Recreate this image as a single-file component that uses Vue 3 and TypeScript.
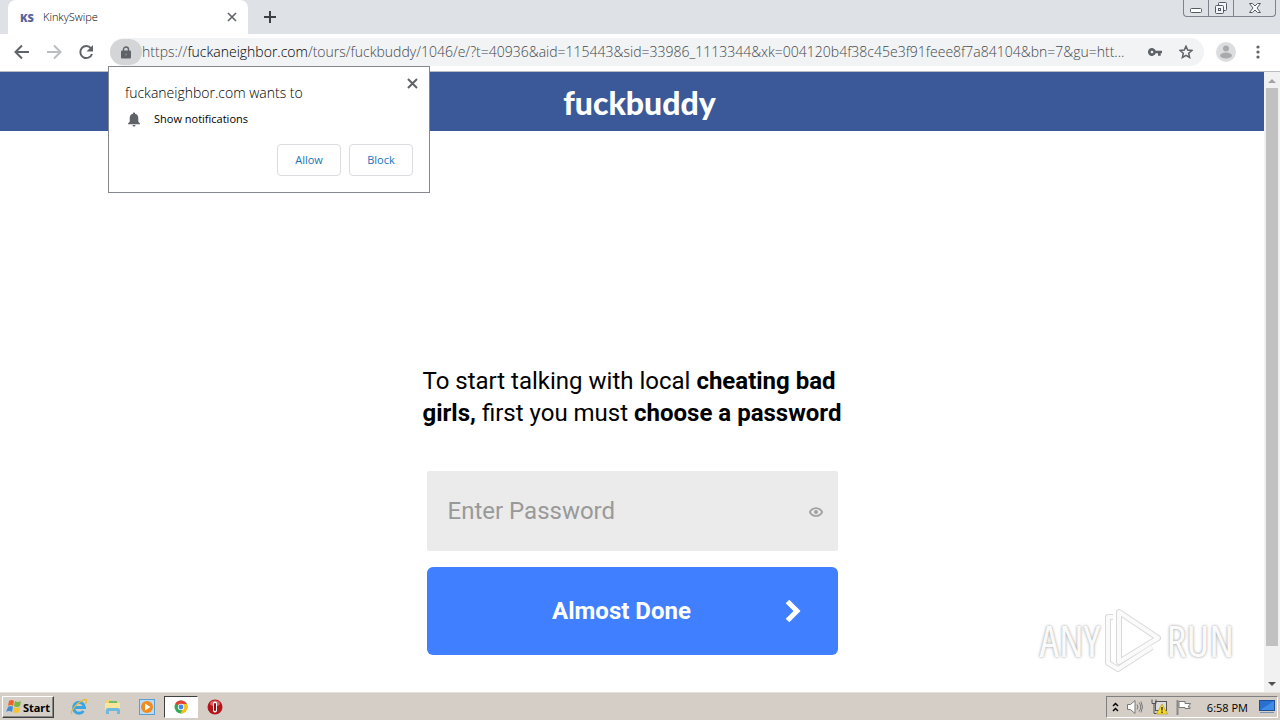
<script setup lang="ts">
import { ref } from 'vue'

const password = ref('')
const address = {
  scheme: 'https://',
  host: 'fuckaneighbor.com',
  path: '/tours/fuckbuddy/1046/e/?t=40936&aid=115443&sid=33986_1113344&xk=004120b4f38c45e3f91feee8f7a84104&bn=7&gu=htt...',
}
</script>

<template>
  <div class="screen">
    <header class="tabstrip">
      <div class="tab">
        <span class="favicon">KS</span>
        <span class="tab-title">KinkySwipe</span>
        <button class="plain" aria-label="Close tab">
          <svg width="10" height="10" viewBox="0 0 10 10"><path d="M1 1l8 8M9 1l-8 8" stroke="#5f6368" stroke-width="1.6" /></svg>
        </button>
      </div>
      <button class="plain new-tab" aria-label="New tab">
        <svg width="12" height="12" viewBox="0 0 12 12"><path d="M6 0v12M0 6h12" stroke="#3c4043" stroke-width="2" /></svg>
      </button>
      <div class="window-buttons">
        <button aria-label="Minimize">
          <svg width="14" height="14" viewBox="0 0 14 14"><rect x="1.5" y="7.5" width="11" height="4" rx="1" fill="#fff" stroke="#555b66" /></svg>
        </button>
        <button aria-label="Restore">
          <svg width="14" height="14" viewBox="0 0 14 14" fill="#f4f5f8" stroke="#555b66"><rect x="4.500" y="1.500" width="8" height="8" rx="1" /><rect x="1.500" y="4.500" width="8" height="8" rx="1" /><rect x="4.500" y="7.500" width="2" height="2" /></svg>
        </button>
        <button class="wide" aria-label="Close">
          <svg width="14" height="14" viewBox="0 0 14 14"><path d="M1.500 2.500h3L7 5l2.500-2.500h3L9 7l3.500 4.500h-3L7 9l-2.500 2.500h-3L5 7z" fill="#fff" stroke="#555b66" /></svg>
        </button>
      </div>
    </header>

    <nav class="toolbar">
      <button class="plain" aria-label="Back">
        <svg width="16" height="16" viewBox="0 0 16 16" fill="none" stroke="#5f6368" stroke-width="2"><path d="M15 8H2M8 1.500L1.500 8L8 14.500" /></svg>
      </button>
      <button class="plain" aria-label="Forward">
        <svg width="16" height="16" viewBox="0 0 16 16" fill="none" stroke="#bbbdbf" stroke-width="2"><path d="M1 8h13M8 1.500L14.500 8L8 14.500" /></svg>
      </button>
      <button class="plain" aria-label="Reload">
        <svg width="16" height="16" viewBox="0 0 16 16"><path d="M13 4.300A6 6 0 1 0 14 10" fill="none" stroke="#5f6368" stroke-width="2" /><path d="M15 1v6.500H8.500z" fill="#5f6368" /></svg>
      </button>
      <div class="omnibox">
        <button class="lock" aria-label="Site information">
          <svg width="10" height="13" viewBox="0 0 10 13"><rect y="4.500" width="10" height="8" rx="1" fill="#5f6368" /><path d="M2.500 5V3.500a2.500 2.500 0 0 1 5 0V5" fill="none" stroke="#5f6368" stroke-width="1.400" /><circle cx="5" cy="8.500" r="1" fill="#85888c" /></svg>
        </button>
        <span class="url">{{ address.scheme }}<b>{{ address.host }}</b>{{ address.path }}</span>
        <button class="plain" aria-label="Saved passwords">
          <svg width="14" height="8" viewBox="0 0 14 8"><path fill="#5f6368" fill-rule="evenodd" d="M7.700 2.700A4 4 0 1 0 7.700 5.300H10v2.500h2.700V5.300H14V2.700zM4 2.700a1.300 1.300 0 1 1 0 2.600a1.300 1.300 0 0 1 0-2.600z" /></svg>
        </button>
        <button class="plain" aria-label="Bookmark this page">
          <svg width="14" height="14" viewBox="0 0 14 14"><path d="M7 1.200l1.700 3.900 4.200.4-3.200 2.800.9 4.200L7 10.300l-3.600 2.200.9-4.200-3.200-2.800 4.200-.4z" fill="none" stroke="#5f6368" stroke-width="1.500" /></svg>
        </button>
      </div>
      <button class="plain profile" aria-label="Profile">
        <svg width="20" height="20" viewBox="0 0 20 20"><circle cx="10" cy="10" r="10" fill="#dcddde" /><circle cx="10" cy="6.500" r="3" fill="#a8aaab" /><ellipse cx="10" cy="13.500" rx="6" ry="3" fill="#a8aaab" /></svg>
      </button>
      <button class="plain" aria-label="Menu">
        <svg width="4" height="14" viewBox="0 0 4 14" fill="#5f6368"><circle cx="2" cy="2" r="1.600" /><circle cx="2" cy="7" r="1.600" /><circle cx="2" cy="12" r="1.600" /></svg>
      </button>
    </nav>

    <section class="permission" role="dialog" aria-label="Notification permission">
      <button class="plain dismiss" aria-label="Dismiss">
        <svg width="11" height="11" viewBox="0 0 11 11"><path d="M1 1l9 9M10 1l-9 9" stroke="#5f6368" stroke-width="2" /></svg>
      </button>
      <p class="asker">fuckaneighbor.com wants to</p>
      <p class="request">
        <svg width="12" height="15" viewBox="0 0 12 15" fill="#5f6368"><path d="M6 .5c.7 0 1.100.5 1.100 1.200C9.200 2.200 10.300 4 10.300 6v3.800L12 11.500v.8H0v-.8l1.700-1.700V6c0-2 1.100-3.800 3.200-4.300C4.900 1 5.300.5 6 .5zM4.500 13h3a1.500 1.500 0 0 1-3 0z" /></svg>
        <span>Show notifications</span>
      </p>
      <div class="choices">
        <button>Allow</button>
        <button>Block</button>
      </div>
    </section>

    <div class="viewport">
      <main class="page">
        <div class="banner"><span class="logo">fuckbuddy</span></div>
        <form class="signup" @submit.prevent>
          <h1>To start talking with local <b>cheating bad<br />girls,</b> first you must <b>choose a password</b></h1>
          <div class="field">
            <input v-model="password" type="password" placeholder="Enter Password" aria-label="Enter Password" />
            <button class="plain" type="button" aria-label="Show password">
              <svg width="14" height="12" viewBox="0 0 14 12" fill="none" stroke="#a0a0a0"><path d="M.8 7C3.500 1.700 10.500 1.700 13.200 7C10.500 12.300 3.500 12.300.8 7z" stroke-width="1.700" /><circle cx="7" cy="7" r="2" fill="#a0a0a0" stroke="none" /></svg>
            </button>
          </div>
          <button class="submit" type="submit">
            <span>Almost Done</span>
            <svg width="16" height="24" viewBox="0 0 16 24"><path d="M2.500 2.500L12 12L2.500 21.500" fill="none" stroke="#fff" stroke-width="5" /></svg>
          </button>
        </form>
      </main>
      <div class="scrollbar">
        <svg width="8" height="4" viewBox="0 0 8 4"><path d="M0 4l4-4 4 4z" fill="#a3a3a3" /></svg>
        <div class="thumb"></div>
        <svg width="8" height="4" viewBox="0 0 8 4"><path d="M0 0l4 4 4-4z" fill="#505050" /></svg>
      </div>
      <div class="watermark">
        <span>ANY</span>
        <svg width="58" height="64" viewBox="0 0 58 64" fill="none" stroke-linejoin="round"><g stroke="#d9d9d9" stroke-width="6"><path d="M15 4l39 26L15 54z" /><path d="M9 9H4v46l10 6 34-22" /></g><g stroke="#fafafa" stroke-width="4"><path d="M15 4l39 26L15 54z" /><path d="M9 9H4v46l10 6 34-22" /></g></svg>
        <span>RUN</span>
      </div>
    </div>

    <footer class="taskbar">
      <button class="start">
        <svg width="16" height="16" viewBox="0 0 16 16"><path d="M3 2q3-2 5 0L7 7Q5 5 2 7z" fill="#e8642b" /><path d="M9 2q3 2 6 0l-1 5q-3 2-6 0z" fill="#79b541" /><path d="M2 8q3-2 5 0l-1 5q-3-2-6 0z" fill="#3e8ddd" /><path d="M8 8q3 2 6 0l-1 5q-3 2-6 0z" fill="#f7c331" /></svg>
        Start
      </button>
      <div class="launchers">
        <button aria-label="Internet Explorer">
          <svg width="18" height="18" viewBox="0 0 18 18" fill="none"><path d="M4 9.500h10.500A5.500 5.500 0 1 0 13.500 13" stroke="#3aa5e5" stroke-width="3" /><path d="M2 16C-1 14 8 3 15 1.500c3-.3 1 3.500.5 4.500" stroke="#e6b93c" stroke-width="1.300" /></svg>
        </button>
        <button aria-label="Explorer">
          <svg width="18" height="18" viewBox="0 0 18 18"><path d="M2 2h5l1 2h7v9H2z" fill="#f1d478" /><path d="M5 3h8v6H5z" fill="#6fbd6b" /><path d="M1 5h15v7H1z" fill="#f7e59b" /><path d="M2 16v-4q0-2 2-2h10q2 0 2 2v4h-3v-3H5v3z" fill="#70b8de" /></svg>
        </button>
        <button aria-label="Media Player">
          <svg width="18" height="18" viewBox="0 0 18 18"><rect x="1.500" y="1.500" width="15" height="15" fill="#b8dcf5" stroke="#5b9ed0" /><circle cx="9" cy="9" r="6" fill="#f28b1d" /><path d="M7 5.500v7l5.500-3.500z" fill="#fff" /></svg>
        </button>
        <button class="active" aria-label="Chrome">
          <svg width="14" height="14" viewBox="0 0 14 14"><circle cx="7" cy="7" r="6.500" fill="#35a853" /><path d="M7 7L1.300 3.700A6.500 6.500 0 0 1 12.800 4z" fill="#e34133" /><path d="M7 4h5.800A6.500 6.500 0 0 1 6.500 13.500L9.500 8z" fill="#fbc116" /><circle cx="7" cy="7" r="3.200" fill="#fff" /><circle cx="7" cy="7" r="2.400" fill="#4384f3" /></svg>
        </button>
        <button aria-label="Opera">
          <svg width="16" height="16" viewBox="0 0 16 16"><circle cx="8" cy="8" r="7.500" fill="#b5161c" /><ellipse cx="8" cy="4.500" rx="5" ry="3" fill="#d96064" /><rect x="6" y="2.500" width="4" height="11" rx="2" fill="#fff" /><rect x="7" y="4" width="2" height="8" rx="1" fill="#8d1015" /></svg>
        </button>
      </div>
      <div class="tray">
        <svg width="7" height="10" viewBox="0 0 7 10" fill="none" stroke="#000" stroke-width="1.500"><path d="M1 4l2.500-2.500L6 4M1 9l2.500-2.500L6 9" /></svg>
        <svg width="16" height="14" viewBox="0 0 16 14" fill="none" stroke="#777"><path d="M.5 4.500h3L8 .5v13l-4.500-4h-3z" fill="#fff" /><path d="M10 4.500q2 2.500 0 5M12 2.500q3.500 4.500 0 9M14 1.500q3 5.500 0 11" /></svg>
        <svg width="17" height="16" viewBox="0 0 17 16"><rect x="4.500" y="2.500" width="11" height="9" fill="#ddd" stroke="#555" /><path d="M1 .5v4h4v-4M3 4.500v10h8" fill="none" stroke="#555" /><path d="M11 5l5.500 10h-11z" fill="#f8dc2d" stroke="#b99d13" stroke-width=".7" /><path d="M11 8v3.500M11 12.500v1.500" stroke="#222" stroke-width="1.300" /></svg>
        <svg width="16" height="15" viewBox="0 0 16 15"><path d="M1.500 0v15" stroke="#888" stroke-width="2" /><path d="M3 1.500h6v2h5.500L12 7h2v1.500H9v-1H3z" fill="#fff" stroke="#777" /></svg>
        <time>6:58 PM</time>
        <svg width="16" height="14" viewBox="0 0 16 14"><rect x=".5" y=".5" width="15" height="10" fill="#2870cf" stroke="#1c4f98" /><path d="M1 10L15 1v9z" fill="#3e8ce6" /><path d="M1 12.500h14" stroke="#7792b3" /></svg>
      </div>
    </footer>
  </div>
</template>

<style>
body {
  margin: 0;
}
</style>

<style scoped>
.screen {
  position: relative;
  display: flex;
  flex-direction: column;
  height: 100vh;
  overflow: hidden;
  background: #fff;
  font-family: "Open Sans", sans-serif;
  font-size: 11px;
  color: #000;
}
button {
  margin: 0;
  padding: 0;
  border: 0;
  background: none;
  font: inherit;
  display: flex;
  align-items: center;
  justify-content: center;
}
svg {
  display: block;
  flex: none;
}
p,
h1 {
  margin: 0;
}
.plain {
  flex: none;
}
.tabstrip {
  display: flex;
  height: 34px;
  padding-left: 8px;
  background: #dee1e6;
}
.tab {
  display: flex;
  align-items: center;
  box-sizing: border-box;
  width: 240px;
  padding: 0 11px 0 12px;
  border-radius: 8px 8px 0 0;
  background: #fff;
  color: #000;
}
.favicon {
  width: 23px;
  font: 800 11px "Open Sans", sans-serif;
  color: #5b639c;
}
.tab-title {
  flex: 1;
  font: 300 11px/16px "Open Sans", sans-serif;
}
.new-tab {
  margin-left: 16px;
}
.window-buttons {
  display: flex;
  height: 16px;
  margin: 0 4px 0 auto;
  border: 1px solid #7d828c;
  border-top: 0;
  border-radius: 0 0 4px 4px;
}
.window-buttons button {
  width: 25px;
  border-right: 1px solid #7d828c;
}
.window-buttons .wide {
  width: 41px;
  border-right: 0;
}
.toolbar {
  display: flex;
  align-items: center;
  gap: 16px;
  height: 36px;
  padding: 0 20px 1px 14px;
  border-bottom: 1px solid #b9bdc3;
}
.omnibox {
  display: flex;
  align-items: center;
  flex: 1;
  min-width: 0;
  height: 28px;
  gap: 17px;
  padding-right: 11px;
  border-radius: 14px;
  background: #f1f3f4;
}
.lock {
  flex: none;
  width: 32px;
  height: 26px;
  border-radius: 13px;
  background: #d3d5d7;
}
.url {
  flex: 1;
  min-width: 0;
  margin-left: -17px;
  white-space: nowrap;
  font: 300 14px/20px "Open Sans", sans-serif;
  color: #45494d;
}
.url b {
  font-weight: 300;
  color: #000;
}
.profile {
  margin: 0 4px 0 -4px;
}
.permission {
  position: absolute;
  z-index: 2;
  top: 66px;
  left: 108px;
  box-sizing: border-box;
  width: 322px;
  padding: 16px;
  border: 1px solid #85888c;
  background: #fff;
}
.dismiss {
  position: absolute;
  top: 11px;
  right: 11px;
}
.asker {
  font: 300 14px/20px "Open Sans", sans-serif;
}
.request {
  display: flex;
  align-items: center;
  gap: 14px;
  height: 16px;
  margin-top: 8px;
  padding-left: 3px;
  font: 400 11px/16px "Open Sans", sans-serif;
}
.choices {
  display: flex;
  justify-content: flex-end;
  gap: 8px;
  margin-top: 17px;
}
.choices button {
  box-sizing: border-box;
  width: 64px;
  height: 32px;
  border: 1px solid #dadce0;
  border-radius: 4px;
  font: 400 11px/16px "Open Sans", sans-serif;
  color: #1a73b8;
}
.viewport {
  position: relative;
  display: flex;
  flex: 1;
  min-height: 0;
}
.page {
  flex: 1;
}
.banner {
  display: flex;
  align-items: center;
  justify-content: center;
  height: 59px;
  background: #3b5998;
}
.logo {
  padding: 2px 0 0 15px;
  font: 900 32px/40px Lato, sans-serif;
  color: #fff;
}
.signup {
  display: flex;
  flex-direction: column;
  width: 411px;
  margin: 234px auto 0;
  font-family: Roboto, sans-serif;
}
h1 {
  margin: 0 -8px 42px -4px;
  white-space: nowrap;
  font: 400 24px/32px Roboto, sans-serif;
}
.field {
  display: flex;
  align-items: center;
  height: 80px;
  box-sizing: border-box;
  padding: 0 15px 0 21px;
  border-radius: 2px;
  background: #ebebeb;
}
.field input {
  flex: 1;
  min-width: 0;
  padding: 0;
  border: 0;
  outline: 0;
  background: none;
  font: 24px Roboto, sans-serif;
}
.field input::placeholder {
  color: #999;
}
.submit {
  height: 88px;
  margin-top: 16px;
  padding: 0 37px 0 32px;
  border-radius: 6px;
  background: #407fff;
  color: #fff;
  font: 700 24px Roboto, sans-serif;
}
.submit span {
  flex: 1;
}
.scrollbar {
  display: flex;
  flex-direction: column;
  align-items: center;
  box-sizing: border-box;
  width: 16px;
  padding: 7px 0 6px;
  background: #f1f1f1;
}
.thumb {
  flex: 1;
  width: 12px;
  margin: 5px 0 36px;
  background: #c1c1c1;
}
.watermark {
  position: absolute;
  right: 46px;
  bottom: 20px;
  display: flex;
  align-items: center;
  gap: 4px;
  font: 44px "Liberation Sans Narrow", "Open Sans", sans-serif;
  font-stretch: condensed;
  color: #fafafa;
  text-shadow: 0 0 3px #959595;
}
.taskbar {
  display: flex;
  align-items: center;
  box-sizing: border-box;
  height: 28px;
  padding: 1px 2px 0;
  border-top: 1px solid #e4e1dc;
  background: #d4cec6;
}
.start {
  gap: 1px;
  box-sizing: border-box;
  width: 52px;
  height: 22px;
  border: 1px solid;
  border-color: #fff #404040 #404040 #fff;
  box-shadow: inset -1px -1px #888;
  font: 700 11px "Noto Sans", sans-serif;
}
.launchers {
  display: flex;
  flex: 1;
  margin-left: 8px;
}
.launchers button {
  box-sizing: border-box;
  width: 34px;
  height: 22px;
}
.launchers .active {
  border: 1px solid;
  border-color: #404040 #fff #fff #404040;
  background: #fff;
}
.tray {
  display: flex;
  align-items: center;
  gap: 8px;
  box-sizing: border-box;
  height: 22px;
  padding: 0 2px 0 5px;
  border: 1px solid;
  border-color: #808080 #fff #fff #808080;
}
time {
  margin: 0 3px 0 7px;
}
</style>
